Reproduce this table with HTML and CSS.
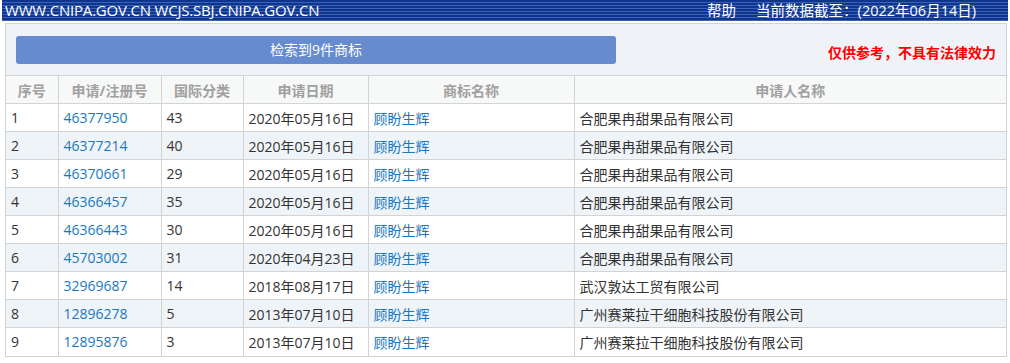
FILE: index.html
```html
<!DOCTYPE html>
<html lang="zh-CN">
<head>
<meta charset="utf-8">
<link rel="stylesheet" href="styles.css">
</head>
<body>
<div class="topbar">
  <div class="sites">WWW.CNIPA.GOV.CN WCJS.SBJ.CNIPA.GOV.CN</div>
  <div class="topright"><span class="help">帮助</span><span class="date">当前数据截至：(2022年06月14日)</span></div>
</div>
<div class="panel">
  <div class="toolbar">
    <div class="result-btn">检索到9件商标</div>
    <div class="notice">仅供参考，不具有法律效力</div>
  </div>
  <table class="grid">
    <colgroup>
      <col class="c1"><col class="c2"><col class="c3"><col class="c4"><col class="c5"><col class="c6">
    </colgroup>
    <thead>
      <tr><th>序号</th><th>申请/注册号</th><th>国际分类</th><th>申请日期</th><th>商标名称</th><th>申请人名称</th></tr>
    </thead>
    <tbody>
      <tr><td>1</td><td><a>46377950</a></td><td>43</td><td>2020年05月16日</td><td><a>顾盼生辉</a></td><td>合肥果冉甜果品有限公司</td></tr>
      <tr><td>2</td><td><a>46377214</a></td><td>40</td><td>2020年05月16日</td><td><a>顾盼生辉</a></td><td>合肥果冉甜果品有限公司</td></tr>
      <tr><td>3</td><td><a>46370661</a></td><td>29</td><td>2020年05月16日</td><td><a>顾盼生辉</a></td><td>合肥果冉甜果品有限公司</td></tr>
      <tr><td>4</td><td><a>46366457</a></td><td>35</td><td>2020年05月16日</td><td><a>顾盼生辉</a></td><td>合肥果冉甜果品有限公司</td></tr>
      <tr><td>5</td><td><a>46366443</a></td><td>30</td><td>2020年05月16日</td><td><a>顾盼生辉</a></td><td>合肥果冉甜果品有限公司</td></tr>
      <tr><td>6</td><td><a>45703002</a></td><td>31</td><td>2020年04月23日</td><td><a>顾盼生辉</a></td><td>合肥果冉甜果品有限公司</td></tr>
      <tr><td>7</td><td><a>32969687</a></td><td>14</td><td>2018年08月17日</td><td><a>顾盼生辉</a></td><td>武汉敦达工贸有限公司</td></tr>
      <tr><td>8</td><td><a>12896278</a></td><td>5</td><td>2013年07月10日</td><td><a>顾盼生辉</a></td><td>广州赛莱拉干细胞科技股份有限公司</td></tr>
      <tr><td>9</td><td><a>12895876</a></td><td>3</td><td>2013年07月10日</td><td><a>顾盼生辉</a></td><td>广州赛莱拉干细胞科技股份有限公司</td></tr>
    </tbody>
  </table>
</div>
</body>
</html>
```
FILE: styles.css
```css
* { box-sizing: border-box; }
body {
  margin: 0;
  background: #fff;
  font-family: "Open Sans", "Noto Sans CJK SC", sans-serif;
  font-size: 14px;
  color: #333;
}
.topbar {
  margin: 0 2px;
  height: 21px;
  display: flex;
  justify-content: space-between;
  align-items: center;
  color: #fff;
  background: repeating-linear-gradient(to bottom, #0d348f 0, #0d348f 2px, #3d62b2 2px, #3d62b2 3px);
  font-size: 15px;
  line-height: 21px;
  white-space: nowrap;
}
.sites { padding-left: 3px; letter-spacing: -0.2px; }
.topright { display: flex; padding-right: 32px; font-size: 14.5px; }
.help { margin-right: 20px; }
.panel {
  margin: 2px 3px 0 5px;
  border: 1px solid #d3d3d3;
  background: #eff3f8;
}
.toolbar {
  height: 51px;
  display: flex;
  align-items: center;
  justify-content: space-between;
  padding: 0 10px 0 10px;
}
.result-btn {
  width: 600px;
  height: 28px;
  margin-top: 1px;
  border-radius: 3px;
  background: #668bcf;
  color: #fff;
  text-align: center;
  line-height: 28px;
}
.notice {
  color: #f00;
  font-weight: bold;
  margin-top: 4px;
}
.grid {
  width: 100%;
  border-collapse: collapse;
  table-layout: fixed;
  background: #fff;
}
.c1 { width: 52px; }
.c2 { width: 103px; }
.c3 { width: 82px; }
.c4 { width: 125px; }
.c5 { width: 206px; }
.grid th, .grid td {
  height: 28px;
  border: 1px solid #d3d3d3;
  padding: 0 5px;
  text-align: left;
  white-space: nowrap;
  font-weight: normal;
}
.grid tr > :first-child { border-left: none; }
.grid tr > :last-child { border-right: none; }
.grid tbody tr:last-child td { border-bottom: none; }
.grid th {
  background: #f7f8f8;
  color: #a0a0a0;
  font-weight: bold;
  text-align: center;
}
.grid tbody tr:nth-child(even) { background: #eff4f8; }
.grid a { color: #1a78c2; }
```
